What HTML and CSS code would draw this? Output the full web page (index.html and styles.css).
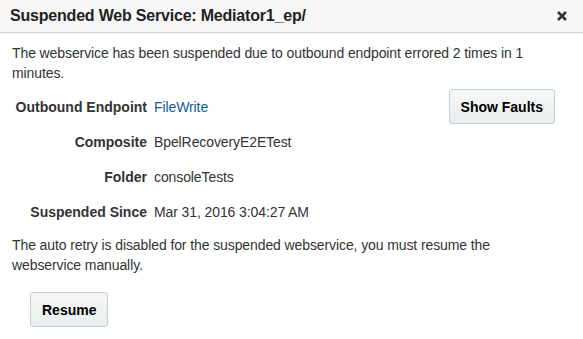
FILE: index.html
```html
<!DOCTYPE html>
<html lang="en">
<head>
  <meta charset="UTF-8">
  <title>Suspended Web Service</title>
  <link rel="stylesheet" href="styles.css">
</head>
<body>
  <div class="dialog">
    <div class="dialog__header">
      <h1 class="dialog__title">Suspended Web Service: Mediator1_ep/</h1>
      <svg class="dialog__close" width="10" height="10" viewBox="0 0 10 10">
        <path d="M1 1L9 9M9 1L1 9" stroke="#333" stroke-width="2.6"/>
      </svg>
    </div>
    <div class="dialog__body">
      <p class="msg">The webservice has been suspended due to outbound endpoint errored 2 times in 1 minutes.</p>
      <div class="details">
        <div class="row">
          <span class="label">Outbound Endpoint</span>
          <a class="value link" href="#">FileWrite</a>
          <button class="btn btn--faults">Show Faults</button>
        </div>
        <div class="row">
          <span class="label">Composite</span>
          <span class="value">BpelRecoveryE2ETest</span>
        </div>
        <div class="row">
          <span class="label">Folder</span>
          <span class="value">consoleTests</span>
        </div>
        <div class="row">
          <span class="label">Suspended Since</span>
          <span class="value">Mar 31, 2016 3:04:27 AM</span>
        </div>
      </div>
      <p class="msg msg--note">The auto retry is disabled for the suspended webservice, you must resume the webservice manually.</p>
      <div class="actions">
        <button class="btn">Resume</button>
      </div>
    </div>
  </div>
</body>
</html>
```

FILE: styles.css
```css
body {
  margin: 0;
  background: #fff;
  font-family: "Liberation Sans", Arial, sans-serif;
  color: #333;
}
.dialog {
  width: 583px;
  height: 339px;
}
.dialog__header {
  display: flex;
  align-items: center;
  justify-content: space-between;
  height: 32px;
  padding: 0 16px 0 10px;
  background: #f7f7f7;
  border-bottom: 1px solid #c9d3dc;
}
.dialog__title {
  margin: 0;
  font-size: 16px;
  font-weight: bold;
  letter-spacing: -0.2px;
  color: #222;
}
.dialog__close {
  display: block;
}
.dialog__body {
  padding: 10px 12px;
}
.msg {
  margin: 0;
  font-size: 14px;
  line-height: 20px;
  letter-spacing: -0.1px;
}
.msg--note {
  max-width: 500px;
}
.details {
  margin: 6px 0 6px;
}
.row {
  display: flex;
  align-items: center;
  height: 35px;
  font-size: 14px;
}
.label {
  width: 135px;
  text-align: right;
  font-weight: bold;
  margin-right: 7px;
}
.value {
  letter-spacing: -0.1px;
}
.link {
  color: #145c9e;
  text-decoration: none;
}
.btn {
  font-family: "Liberation Sans", Arial, sans-serif;
  font-size: 14px;
  font-weight: bold;
  color: #000;
  height: 35px;
  padding: 0 11px;
  background: linear-gradient(#f7f8f8, #e9eded);
  border: 1px solid #c4ced7;
  border-radius: 3px;
}
.btn--faults {
  margin-left: auto;
  margin-right: 16px;
}
.actions {
  padding: 17px 0 0 18px;
}
.actions .btn {
  width: 78px;
}
```
